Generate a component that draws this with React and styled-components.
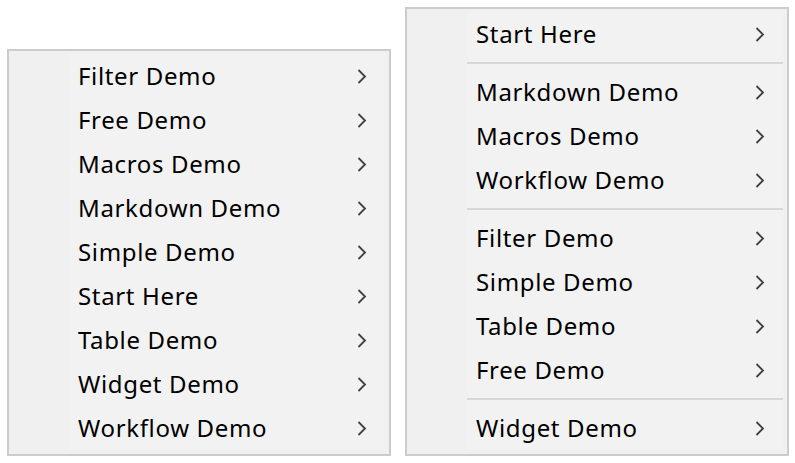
import React from 'react'
import styled, { createGlobalStyle } from 'styled-components'

const GlobalStyle = createGlobalStyle`
    html, body {
        margin: 0;
        padding: 0;
        background: #ffffff;
    }
`

//Page wrapper holding both menus side by side
const Page = styled.div`
    display: flex;
    align-items: flex-end;
    gap: 14px;
    padding: 7px 0 0 7px;
    height: 449px;
`

//-------------------------------------------Menu---------------------------------------
const Menu = styled.div`
    box-sizing: border-box;
    width: 384px;
    height: ${props => props.$height}px;
    border: 2px solid #cccccc;
    background: #f0f0f0;
    padding: 3px 4px 4px 0;
`

//Item area to the right of the icon gutter
const ItemList = styled.div`
    margin-left: 60px;
    background: #f2f2f2;
`

const Item = styled.div`
    height: 44px;
    display: flex;
    align-items: center;
    justify-content: space-between;
    padding: 0 18px 0 9px;
    font-family: "Noto Sans", "Open Sans", sans-serif;
    font-size: 24px;
    letter-spacing: 0.65px;
    color: #000000;
`

const Label = styled.span`
    line-height: 1;
    margin-top: -1px;
`

const Separator = styled.div`
    height: 14px;
    display: flex;
    align-items: center;

    &::after {
        content: "";
        flex: 1;
        height: 2px;
        background: #d7d7d7;
    }
`

function Chevron () {
    return (
        <svg width="10" height="15" viewBox="0 0 10 15">
            <path d="M1.5 1 L8 7.5 L1.5 14" fill="none" stroke="#404040" strokeWidth="1.8" />
        </svg>
    )
}

function MenuItem ({label}) {
    return (
        <Item>
            <Label>{label}</Label>
            <Chevron />
        </Item>
    )
}

//groups are split by separators
function ContextMenu ({groups, height}) {
    return (
        <Menu $height={height}>
            <ItemList>
                {groups.map((group, i) => (
                    <React.Fragment key={i}>
                        {i > 0 && <Separator />}
                        {group.map(label => <MenuItem key={label} label={label} />)}
                    </React.Fragment>
                ))}
            </ItemList>
        </Menu>
    )
}

const sortedMenu = [[
    'Filter Demo',
    'Free Demo',
    'Macros Demo',
    'Markdown Demo',
    'Simple Demo',
    'Start Here',
    'Table Demo',
    'Widget Demo',
    'Workflow Demo',
]]

const groupedMenu = [
    ['Start Here'],
    ['Markdown Demo', 'Macros Demo', 'Workflow Demo'],
    ['Filter Demo', 'Simple Demo', 'Table Demo', 'Free Demo'],
    ['Widget Demo'],
]

export default function App() {
    return (
        <>
            <GlobalStyle />
            <Page>
                <ContextMenu groups={sortedMenu} height={407} />
                <ContextMenu groups={groupedMenu} height={449} />
            </Page>
        </>
    )
}
